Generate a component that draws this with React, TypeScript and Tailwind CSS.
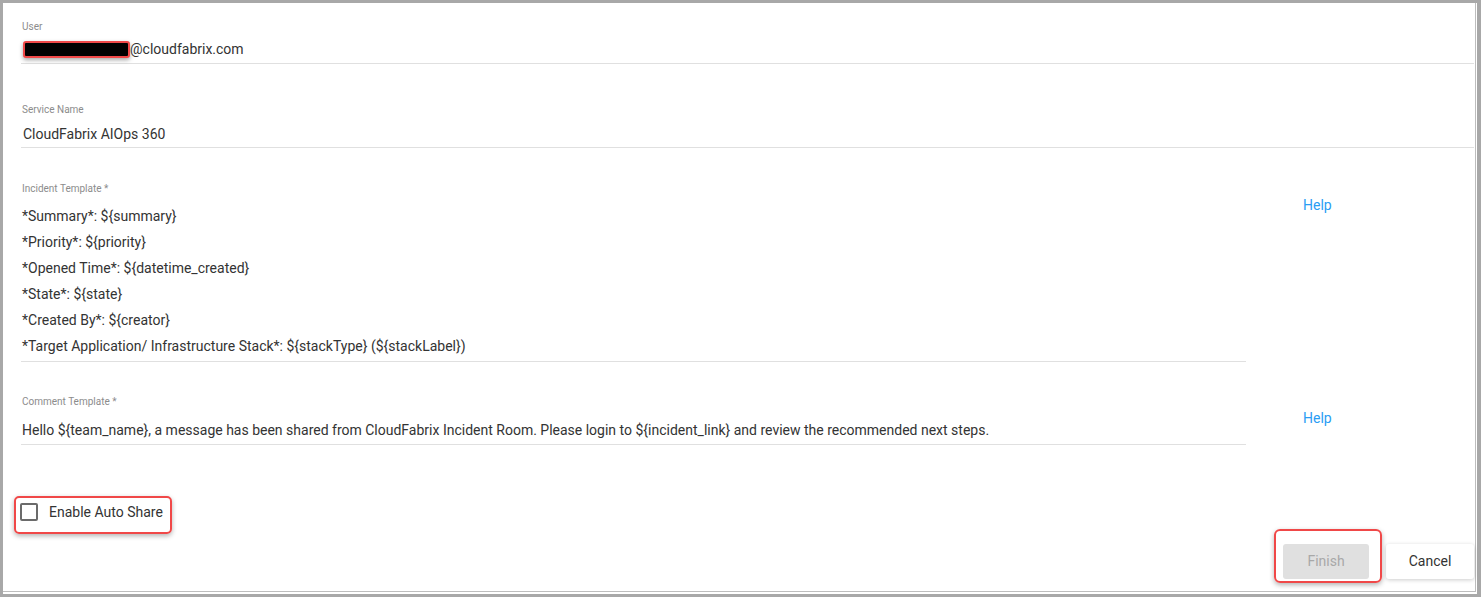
import React from 'react';

const font = { fontFamily: 'Roboto, "Liberation Sans", sans-serif' };

const incidentLines = [
  '*Summary*: ${summary}',
  '*Priority*: ${priority}',
  '*Opened Time*: ${datetime_created}',
  '*State*: ${state}',
  '*Created By*: ${creator}',
  '*Target Application/ Infrastructure Stack*: ${stackType} (${stackLabel})',
];

const Label: React.FC<{ text: string }> = ({ text }) => (
  <div className="text-[10px] leading-[12px] text-[#8c8c8c] pl-[1px]">{text}</div>
);

const HelpLink = () => (
  <a className="ml-[57px] mt-[12px] text-[14px] leading-[20px] text-[#2a9df4] cursor-pointer">Help</a>
);

export default function App() {
  return (
    <div className="w-[1481px] h-[597px] bg-[#a8a8a8] pt-[3px] pl-[3px] pr-[4px] pb-[3px]" style={font}>
      <div className="w-full h-full bg-white pr-[1px] pb-[2px]">
        <div className="w-full h-full border-r border-b border-[#bdbdbd] pl-[18px] pr-[1px] flex flex-col text-[#333]">
          {/* User */}
          <div className="pt-[18px]">
            <Label text="User" />
            <div className="mt-[6px] text-[14px] leading-[20px] pb-[4px] border-b border-[#e0e0e0] flex items-center">
              <span className="inline-block ml-[2px] w-[107px] h-[17px] bg-black border-2 border-[#f04848] rounded-[3px] shadow-[0_2px_4px_rgba(0,0,0,0.35)]" />
              <span>@cloudfabrix.com</span>
            </div>
          </div>

          {/* Service Name */}
          <div className="pt-[40px]">
            <Label text="Service Name" />
            <div className="mt-[8px] text-[14px] leading-[20px] pb-[3px] border-b border-[#e0e0e0] pl-[2px]">
              CloudFabrix AIOps 360
            </div>
          </div>

          {/* Incident Template */}
          <div className="pt-[35px] flex items-start">
            <div className="w-[1225px]">
              <Label text="Incident Template *" />
              <div className="mt-[8px] text-[14px] leading-[26px] pb-[2px] border-b border-[#e0e0e0] pl-[1px]">
                {incidentLines.map((l) => (
                  <div key={l}>{l}</div>
                ))}
              </div>
            </div>
            <HelpLink />
          </div>

          {/* Comment Template */}
          <div className="pt-[34px] flex items-start">
            <div className="w-[1225px]">
              <Label text="Comment Template *" />
              <div className="mt-[12px] text-[14px] leading-[20px] pb-[4px] border-b border-[#e0e0e0] pl-[1px]">
                Hello {'${team_name}'}, a message has been shared from CloudFabrix Incident Room. Please login to {'${incident_link}'} and review the recommended next steps.
              </div>
            </div>
            <HelpLink />
          </div>

          {/* Enable Auto Share */}
          <div className="mt-[58px] ml-[-1px] flex items-center relative w-fit">
            <div className="absolute left-[-6px] top-[-7px] w-[158px] h-[38px] border-2 border-[#f04848] rounded-[5px] shadow-[0_2px_5px_rgba(0,0,0,0.3)]" />
            <div className="w-[18px] h-[18px] border-2 border-[#6b6b6b] rounded-[2px]" />
            <span className="ml-[11px] text-[14px] leading-[18px]">Enable Auto Share</span>
          </div>

          {/* Buttons */}
          <div className="mt-[23px] flex justify-end gap-[17px]">
            <div className="relative">
              <div className="absolute left-[-9px] top-[-15px] w-[108px] h-[54px] border-2 border-[#f04848] rounded-[6px] shadow-[0_2px_5px_rgba(0,0,0,0.3)]" />
              <button className="w-[86px] h-[35px] bg-[#e0e0e0] text-[#a8a8a8] text-[14px] rounded-[3px]">
                Finish
              </button>
            </div>
            <button className="w-[88px] h-[35px] bg-white text-[#333] text-[14px] rounded-[3px] shadow-[0_1px_4px_rgba(0,0,0,0.2)]">
              Cancel
            </button>
          </div>
        </div>
      </div>
    </div>
  );
}
